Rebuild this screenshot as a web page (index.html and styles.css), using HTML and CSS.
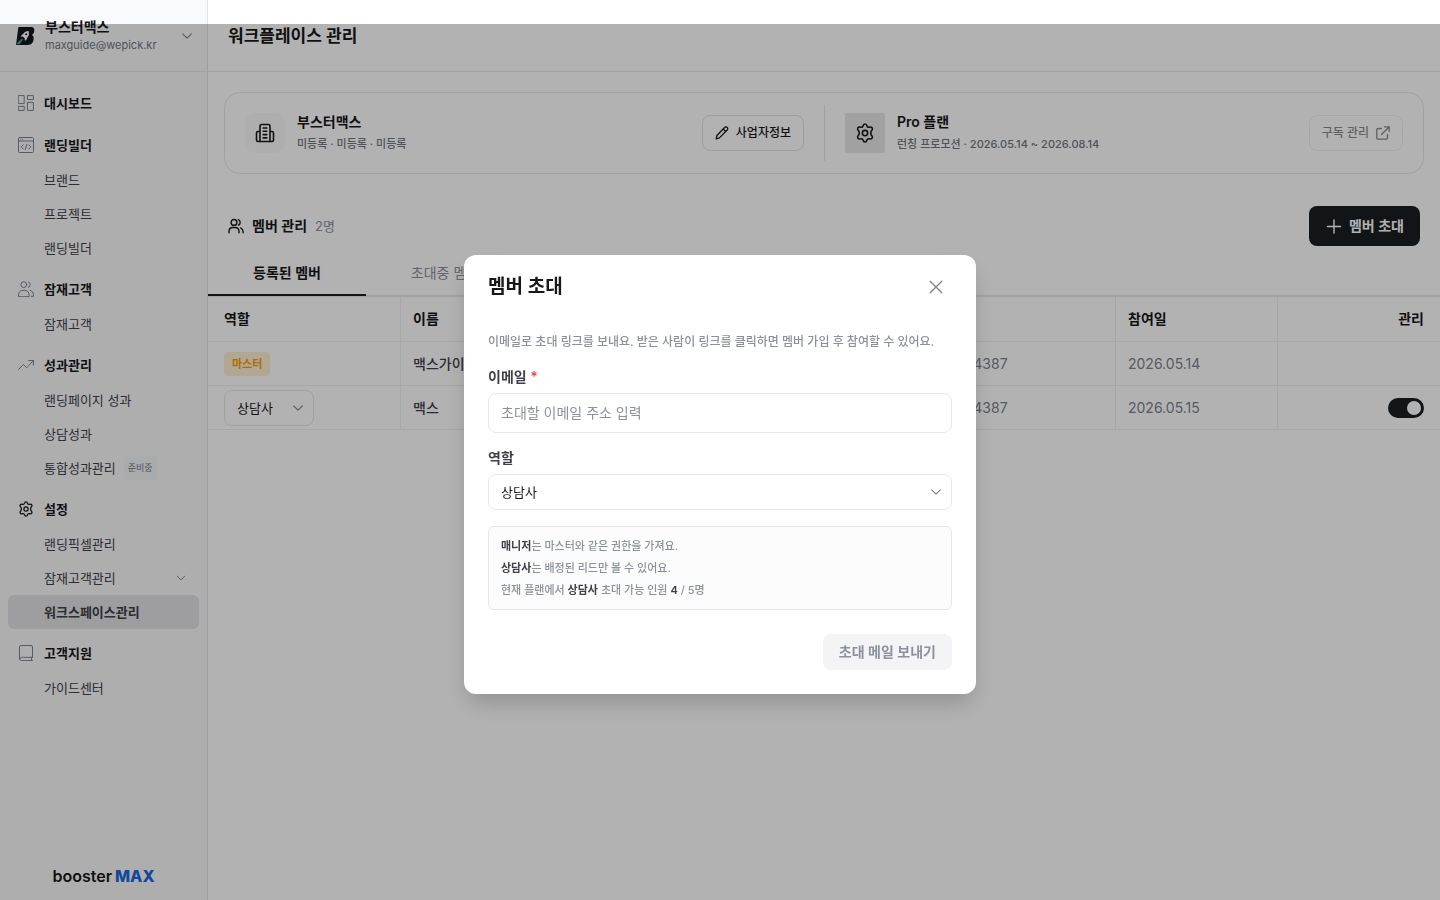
FILE: index.html
```html
<!DOCTYPE html>
<html lang="ko">
<head>
    <meta charset="UTF-8">
    <meta name="viewport" content="width=device-width, initial-scale=1.0">
    <title>워크플레이스 관리 | boosterMAX</title>
    <link rel="stylesheet" href="styles.css">
</head>
<body>
    <!-- shared icons -->
    <svg class="sprite" aria-hidden="true">
        <symbol id="chevron" viewBox="0 0 16 16"><path d="M3 5.500l5 5 5-5"/></symbol>
        <symbol id="gear" viewBox="0 0 24 24">
            <path d="M9.6 3.6C10 2 10.7 1.200 12 1.200s2 .8 2.400 2.400c.3 1.100 1.500 1.700 2.600 1.400 1.700-.5 2.900-.3 3.600.9s.3 2.300-.9 3.500c-1.100 1.100-1.100 4.100 0 5.200 1.200 1.200 1.600 2.300.9 3.500s-1.900 1.400-3.600.9c-1.100-.3-2.300.3-2.600 1.400-.4 1.600-1.100 2.400-2.400 2.400s-2-.8-2.400-2.400c-.3-1.100-1.500-1.700-2.600-1.400-1.700.5-2.900.3-3.600-.9s-.3-2.300.9-3.500c1.100-1.100 1.100-4.100 0-5.200-1.200-1.200-1.600-2.300-.9-3.500s1.900-1.400 3.600-.9c1.100.3 2.300-.3 2.600-1.400z"/>
            <circle cx="12" cy="12" r="3.200"/>
        </symbol>
        <symbol id="users" viewBox="0 0 16 16">
            <circle cx="6" cy="4.400" r="2.900"/>
            <path d="M1 14.700v-1.400a4 4 0 0 1 4-3.800h2a4 4 0 0 1 4 3.800v1.400M10.300 1.700a2.900 2.900 0 0 1 0 5.400M12.600 9.900a4 4 0 0 1 2.500 3.600v1.200"/>
        </symbol>
    </svg>

    <div class="layout">
        <aside class="sidebar">
            <button class="account" type="button">
                <svg class="account-logo" viewBox="0 0 20 20" aria-hidden="true">
                    <path fill="#111820" d="M3.400 1H16c2.600 0 3.700 1.600 3.200 4.200-.3 1.800-1 3-2.300 3.800 1.500.7 2 2 1.700 4.300-.5 4-2.400 5.700-6 5.700H1z"/>
                    <path fill="#fff" d="M13.700 5c-2.700 0-4.500 1.100-5.600 3L6.400 9.200l-.6 1.500 2-.2 2 1.900v2.300l1.500-.8 1-2.200c1.500-1.500 2-3.500 1.400-6.700z"/>
                    <circle cx="11.200" cy="8.200" r="1" fill="#111820"/>
                    <path fill="#3fa58a" d="M6.900 12.400l1.100 1.200L4.600 18.200H1.200l1.200-1.500z"/>
                </svg>
                <span class="account-text">
                    <strong>부스터맥스</strong>
                    <small>maxguide@wepick.kr</small>
                </span>
                <svg class="icon icon-sm"><use href="#chevron"/></svg>
            </button>

            <nav class="menu">
                <section class="menu-group">
                    <a class="menu-title" href="#">
                        <svg class="icon" viewBox="0 0 16 16"><path d="M.6.6h5.600v8H.6zM9.800.6h5.600v4H9.800zM.6 11.400h5.600v4H.6zM9.800 7.400h5.600v8H9.800z"/></svg>
                        대시보드
                    </a>
                </section>
                <section class="menu-group">
                    <a class="menu-title" href="#">
                        <svg class="icon" viewBox="0 0 16 16"><rect x=".5" y=".5" width="15" height="15" rx="1"/><path d="M.5 4h15M5.300 7.800L3.200 9.900l2.100 2.100M10.700 7.800l2.100 2.100-2.100 2.100M8.800 7.300l-1.600 5.200M2.500 2.300h.1M4.300 2.300h.1"/></svg>
                        랜딩빌더
                    </a>
                    <a class="menu-item" href="#">브랜드</a>
                    <a class="menu-item" href="#">프로젝트</a>
                    <a class="menu-item" href="#">랜딩빌더</a>
                </section>
                <section class="menu-group">
                    <a class="menu-title" href="#">
                        <svg class="icon" viewBox="0 0 16 16"><circle cx="5.800" cy="3.600" r="2.900"/><path d="M.5 15.300v-1.500a4.500 4.500 0 0 1 4.500-4.500h1.600a4.500 4.500 0 0 1 4.500 4.500v1.500zM10.300.9a2.900 2.900 0 0 1 0 5.500M12.300 9.300a4.500 4.500 0 0 1 3.200 4.300v1.700h-2.300"/></svg>
                        잠재고객
                    </a>
                    <a class="menu-item" href="#">잠재고객</a>
                </section>
                <section class="menu-group">
                    <a class="menu-title" href="#">
                        <svg class="icon" viewBox="0 0 16 16"><path d="M.5 12.500L5.300 7.500l3.400 3.200 6.500-7M10.700 3.500h4.700v4.700"/></svg>
                        성과관리
                    </a>
                    <a class="menu-item" href="#">랜딩페이지 성과</a>
                    <a class="menu-item" href="#">상담성과</a>
                    <a class="menu-item" href="#">통합성과관리 <span class="soon">준비중</span></a>
                </section>
                <section class="menu-group">
                    <a class="menu-title" href="#">
                        <svg class="icon icon-dark icon-gear"><use href="#gear"/></svg>
                        설정
                    </a>
                    <a class="menu-item" href="#">랜딩픽셀관리</a>
                    <a class="menu-item" href="#">잠재고객관리 <svg class="icon icon-sm menu-more"><use href="#chevron"/></svg></a>
                    <a class="menu-item active" href="#">워크스페이스관리</a>
                </section>
                <section class="menu-group">
                    <a class="menu-title" href="#">
                        <svg class="icon" viewBox="0 0 16 16"><path d="M14.500 12.300H3.200a1.700 1.700 0 0 0 0 3.300h11.300M1.500 14V2A1.500 1.500 0 0 1 3 .5h10A1.500 1.500 0 0 1 14.500 2v10.300M13.500 12.500v3"/></svg>
                        고객지원
                    </a>
                    <a class="menu-item" href="#">가이드센터</a>
                </section>
            </nav>

            <div class="brand">booster<span>MAX</span></div>
        </aside>

        <main class="content">
            <header class="page-header">
                <h1>워크플레이스 관리</h1>
            </header>

            <section class="summary">
                <div class="summary-cell">
                    <span class="summary-icon">
                        <svg class="icon icon-lg icon-bold" viewBox="0 0 20 20"><path d="M5 18.500V3a1.500 1.500 0 0 1 1.500-1.500h7A1.500 1.500 0 0 1 15 3v15.500M5 8.500H3A1.500 1.500 0 0 0 1.500 10v7A1.500 1.500 0 0 0 3 18.500h14a1.500 1.500 0 0 0 1.500-1.500v-7A1.500 1.500 0 0 0 17 8.500h-2M8.200 5h3.600M8.200 8.300h3.600M8.200 11.600h3.600M8.200 14.900h3.600"/></svg>
                    </span>
                    <div class="summary-text">
                        <h2>부스터맥스</h2>
                        <p>미등록 · 미등록 · 미등록</p>
                    </div>
                    <button class="btn btn-outline" type="button">
                        <svg class="icon icon-dark icon-sm" viewBox="0 0 14 14"><path d="M1.200 12.800l.7-3.300 7.700-8a1.700 1.700 0 0 1 2.600 0 1.700 1.700 0 0 1 0 2.500l-7.800 7.900zM8.200 3l2.600 2.600"/></svg>
                        사업자정보
                    </button>
                </div>
                <div class="summary-cell">
                    <span class="summary-icon plan">
                        <svg class="icon icon-lg icon-bold icon-gear"><use href="#gear"/></svg>
                    </span>
                    <div class="summary-text">
                        <h2>Pro 플랜</h2>
                        <p>런칭 프로모션 · 2026.05.14 ~ 2026.08.14</p>
                    </div>
                    <button class="btn btn-outline" type="button" disabled>
                        구독 관리
                        <svg class="icon icon-dark icon-sm" viewBox="0 0 14 14"><path d="M5.500 2.500H2A1.200 1.200 0 0 0 .8 3.700V12A1.200 1.200 0 0 0 2 13.200h8.300a1.200 1.200 0 0 0 1.200-1.200V8.500M8.500.8h4.700v4.700M13.200.8L5.500 8.500"/></svg>
                    </button>
                </div>
            </section>

            <section class="members">
                <div class="members-head">
                    <svg class="icon icon-dark icon-users"><use href="#users"/></svg>
                    <h2>멤버 관리</h2>
                    <span class="count">2명</span>
                    <button class="btn btn-primary" type="button">
                        <svg class="icon icon-plus" viewBox="0 0 18 18"><path d="M9 3v13M2.500 9.500h13"/></svg>
                        멤버 초대
                    </button>
                </div>

                <div class="tabs" role="tablist">
                    <button class="tab selected" type="button" role="tab" aria-selected="true">등록된 멤버</button>
                    <button class="tab" type="button" role="tab" aria-selected="false">초대중 멤버</button>
                </div>

                <table class="member-table">
                    <colgroup>
                        <col class="col-role">
                        <col class="col-name">
                        <col>
                        <col class="col-phone">
                        <col class="col-date">
                        <col class="col-manage">
                    </colgroup>
                    <thead>
                        <tr><th>역할</th><th>이름</th><th>이메일</th><th>연락처</th><th>참여일</th><th>관리</th></tr>
                    </thead>
                    <tbody>
                        <tr>
                            <td><span class="badge">마스터</span></td>
                            <td class="name">맥스가이드</td>
                            <td>maxguide@wepick.kr</td>
                            <td>010-0011-4387</td>
                            <td>2026.05.14</td>
                            <td></td>
                        </tr>
                        <tr>
                            <td>
                                <span class="select select-role">
                                    <select aria-label="맥스 역할">
                                        <option>상담사</option>
                                        <option>매니저</option>
                                    </select>
                                    <svg class="icon icon-sm"><use href="#chevron"/></svg>
                                </span>
                            </td>
                            <td class="name">맥스</td>
                            <td>max@wepick.kr</td>
                            <td>010-0011-4387</td>
                            <td>2026.05.15</td>
                            <td><input class="toggle" type="checkbox" role="switch" aria-label="맥스 활성화" checked></td>
                        </tr>
                    </tbody>
                </table>
            </section>
        </main>
    </div>

    <div class="overlay">
        <form class="modal" role="dialog" aria-modal="true" aria-labelledby="invite-title">
            <header class="modal-header">
                <h2 id="invite-title">멤버 초대</h2>
                <button class="close" type="button" aria-label="닫기">
                    <svg class="icon icon-sm" viewBox="0 0 14 14"><path d="M1.200 1.200l11.600 11.600M12.800 1.200L1.200 12.800"/></svg>
                </button>
            </header>
            <div class="modal-body">
                <p class="modal-desc">이메일로 초대 링크를 보내요. 받은 사람이 링크를 클릭하면 멤버 가입 후 참여할 수 있어요.</p>
                <div class="field">
                    <label for="email">이메일 <span class="required">*</span></label>
                    <input id="email" type="email" placeholder="초대할 이메일 주소 입력">
                </div>
                <div class="field">
                    <label for="role">역할</label>
                    <span class="select">
                        <select id="role">
                            <option>상담사</option>
                            <option>매니저</option>
                        </select>
                        <svg class="icon icon-sm"><use href="#chevron"/></svg>
                    </span>
                </div>
                <div class="notice">
                    <p><strong>매니저</strong>는 마스터와 같은 권한을 가져요.</p>
                    <p><strong>상담사</strong>는 배정된 리드만 볼 수 있어요.</p>
                    <p>현재 플랜에서 <strong>상담사</strong> 초대 가능 인원 <strong>4</strong> / 5명</p>
                </div>
            </div>
            <footer class="modal-footer">
                <button class="btn btn-send" type="submit" disabled>초대 메일 보내기</button>
            </footer>
        </form>
    </div>
</body>
</html>
```
FILE: styles.css
```css
* {
    box-sizing: border-box;
}
body {
    margin: 0;
    font-family: Inter, "Noto Sans CJK KR", sans-serif;
    font-size: 14px;
    line-height: 20px;
    color: #18181b;
    background: #fff;
}
h1, h2, p {
    margin: 0;
}
a {
    color: inherit;
    text-decoration: none;
}
button, input, select {
    font: inherit;
    color: inherit;
}
button {
    cursor: pointer;
}

/* Icons */
.sprite {
    display: none;
}
.icon {
    width: 16px;
    height: 16px;
    flex: none;
    fill: none;
    stroke: #7c828d;
    stroke-width: 1;
    stroke-linecap: round;
    stroke-linejoin: round;
}
.icon-sm {
    width: 14px;
    height: 14px;
    stroke-width: 1.3;
}
.icon-lg {
    width: 20px;
    height: 20px;
}
.icon-dark, .icon-bold {
    stroke: #18181b;
}
.icon-bold {
    stroke-width: 1.6;
}
.icon-gear {
    stroke-width: 1.9;
}
.icon-users {
    stroke-width: 1.4;
}
.icon-plus {
    width: 18px;
    height: 18px;
    stroke-width: 1.4;
}

.layout {
    display: flex;
    min-height: 100vh;
}

/* Sidebar */
.sidebar {
    display: flex;
    flex-direction: column;
    width: 208px;
    flex: none;
    background: #f9fafb;
    border-right: 1px solid #e2e4e8;
}
.account {
    display: flex;
    align-items: center;
    gap: 10px;
    height: 72px;
    padding: 0 13px 0 15px;
    background: none;
    border: 0;
    border-bottom: 1px solid #e5e7eb;
    text-align: left;
}
.account-logo {
    width: 20px;
    height: 20px;
    flex: none;
}
.account-text {
    flex: 1;
    line-height: 18px;
}
.account-text strong, .account-text small {
    display: block;
}
.account-text strong {
    font-weight: 600;
}
.account-text small {
    font-size: 11px;
    color: #71767f;
}
.menu {
    flex: 1;
    display: flex;
    flex-direction: column;
    gap: 6px;
    padding: 13px 8px;
    font-size: 13px;
}
.menu-title {
    display: flex;
    align-items: center;
    gap: 10px;
    height: 36px;
    padding: 0 10px;
    font-weight: 600;
}
.menu-item {
    display: flex;
    align-items: center;
    gap: 8px;
    height: 34px;
    padding: 0 12px 0 36px;
    border-radius: 6px;
    color: #3f3f4a;
}
.menu-item.active {
    background: #e2e3e6;
    font-weight: 600;
}
.menu-more {
    width: 12px;
    height: 12px;
    margin-left: auto;
}
.soon {
    padding: 2px 4px;
    border-radius: 4px;
    background: #f4f5f7;
    font-size: 9px;
    color: #71767f;
}
.brand {
    padding: 0 0 14px;
    font-size: 16px;
    font-weight: 600;
    text-align: center;
}
.brand span {
    margin-left: 3px;
    font-weight: 800;
    color: #1769e0;
}

/* Page */
.content {
    flex: 1;
    min-width: 0;
}
.page-header {
    display: flex;
    align-items: center;
    height: 72px;
    padding: 0 20px;
    border-bottom: 1px solid #e5e7eb;
}
.page-header h1 {
    font-size: 17px;
    font-weight: 600;
}
.summary {
    display: grid;
    grid-template-columns: 1fr 1fr;
    margin: 20px 16px 32px;
    padding: 12px 0;
    border: 1px solid #e5e7eb;
    border-radius: 16px;
}
.summary-cell {
    display: flex;
    align-items: center;
    gap: 12px;
    padding: 6px 20px;
}
.summary-cell + .summary-cell {
    border-left: 1px solid #e5e7eb;
}
.summary-icon {
    display: grid;
    place-items: center;
    width: 40px;
    height: 40px;
    border-radius: 10px;
    background: #f9fafb;
}
.summary-icon.plan {
    border-radius: 2px;
    background: #e7e7e8;
}
.summary-text {
    flex: 1;
    line-height: 22px;
}
.summary-text h2, .members-head h2 {
    font-size: 14px;
    font-weight: 600;
}
.summary-text p {
    font-size: 11px;
    font-weight: 500;
    color: #71767f;
}

/* Buttons */
.btn {
    display: flex;
    align-items: center;
    gap: 6px;
    height: 36px;
    padding: 0 12px;
    border: 0;
    border-radius: 8px;
    font-weight: 600;
}
.btn-outline {
    gap: 7px;
    border: 1px solid #e0e2e6;
    background: #fff;
    font-size: 12px;
    font-weight: 500;
}
.btn-outline:disabled {
    opacity: 0.5;
}
.btn-primary {
    height: 40px;
    padding: 0 16px;
    margin-left: auto;
    background: #1b1f23;
    color: #fff;
}
.btn-primary .icon {
    stroke: #fff;
}
.btn-send {
    padding: 0 16px;
    background: #f4f4f6;
    color: #8b919c;
}

/* Members */
.members-head {
    display: flex;
    align-items: center;
    gap: 8px;
    padding: 0 20px;
}
.count {
    font-size: 13px;
    color: #8b919c;
}
.tabs {
    display: flex;
    height: 45px;
    margin-top: 6px;
    border-bottom: 2px solid #e5e7eb;
}
.tab {
    width: 158px;
    height: 44px;
    padding: 0;
    background: none;
    border: 0;
    border-bottom: 2px solid transparent;
    color: #8b919c;
}
.tab.selected {
    border-color: #1b1f23;
    color: #18181b;
    font-weight: 600;
}
.member-table {
    width: 100%;
    table-layout: fixed;
    border-collapse: separate;
    border-spacing: 0;
}
.col-role {
    width: 193px;
}
.col-name {
    width: 200px;
}
.col-phone {
    width: 220px;
}
.col-date, .col-manage {
    width: 162px;
}
.member-table th, .member-table td {
    height: 44px;
    padding: 0 12px;
    border-right: 1px solid #efeff1;
    border-bottom: 1px solid #efeff1;
    text-align: left;
}
.member-table th {
    height: 45px;
    font-weight: 600;
}
.member-table td {
    color: #7c828d;
}
.member-table th:first-child, .member-table td:first-child {
    padding-left: 16px;
}
.member-table th:last-child, .member-table td:last-child {
    padding-right: 16px;
    border-right: 0;
    text-align: right;
}
.member-table .name {
    color: #3f3f4a;
    font-weight: 500;
}
.badge {
    display: block;
    width: fit-content;
    padding: 0 8px;
    border-radius: 4px;
    background: #fff0d2;
    color: #f59e0b;
    font-size: 11px;
    line-height: 24px;
    font-weight: 600;
}
.toggle {
    appearance: none;
    display: flex;
    justify-content: flex-end;
    width: 36px;
    height: 20px;
    margin: 0 0 0 auto;
    padding: 3px;
    border-radius: 10px;
    background: #1b1f23;
}
.toggle::before {
    content: "";
    width: 14px;
    height: 14px;
    border-radius: 50%;
    background: #fff;
}

/* Select: the arrow shares the grid cell with the control */
.select {
    display: grid;
    align-items: center;
    font-size: 13px;
}
.select select, .select .icon {
    grid-area: 1 / 1;
}
.select select {
    appearance: none;
    width: 100%;
    height: 36px;
    padding: 0 30px 0 12px;
    border: 1px solid #e5e7eb;
    border-radius: 8px;
    background: #fff;
    color: #18181b;
}
.select .icon {
    justify-self: end;
    margin-right: 9px;
    pointer-events: none;
}
.select-role {
    width: 90px;
}

/* Invite modal, the dim starts below the 24px top strip */
.overlay {
    position: fixed;
    inset: 24px 0 -24px;
    display: grid;
    place-items: center;
    background: rgba(0, 0, 0, 0.3);
}
.modal {
    width: 512px;
    max-width: 100%;
    border-radius: 12px;
    background: #fff;
    box-shadow: 0 12px 24px -4px rgba(0, 0, 0, 0.2);
}
.modal-header {
    display: flex;
    align-items: center;
    justify-content: space-between;
    padding: 16px 24px;
}
.modal-header h2 {
    font-size: 19px;
    font-weight: 600;
}
.close {
    display: grid;
    place-items: center;
    width: 32px;
    height: 32px;
    padding: 0;
    background: none;
    border: 0;
}
.modal-body {
    display: flex;
    flex-direction: column;
    gap: 16px;
    padding: 13px 24px 24px;
}
.modal-desc {
    font-size: 12px;
    font-weight: 500;
    color: #8b919c;
}
.field label {
    display: block;
    margin-bottom: 8px;
    line-height: 17px;
    font-weight: 600;
    color: #3f3f4a;
}
.required {
    color: #f04438;
}
.field input {
    display: block;
    width: 100%;
    height: 40px;
    padding: 0 12px;
    border: 1px solid #e5e7eb;
    border-radius: 8px;
    background: #fff;
}
.field input::placeholder {
    color: #8b919c;
}
.notice {
    padding: 8px 12px;
    border: 1px solid #e5e7eb;
    border-radius: 6px;
    background: #fcfcfc;
    font-size: 11px;
    line-height: 22px;
    font-weight: 500;
    color: #8b919c;
}
.notice strong {
    font-weight: 600;
    color: #3f3f4a;
}
.modal-footer {
    display: flex;
    justify-content: flex-end;
    padding: 0 24px 24px;
}
```
